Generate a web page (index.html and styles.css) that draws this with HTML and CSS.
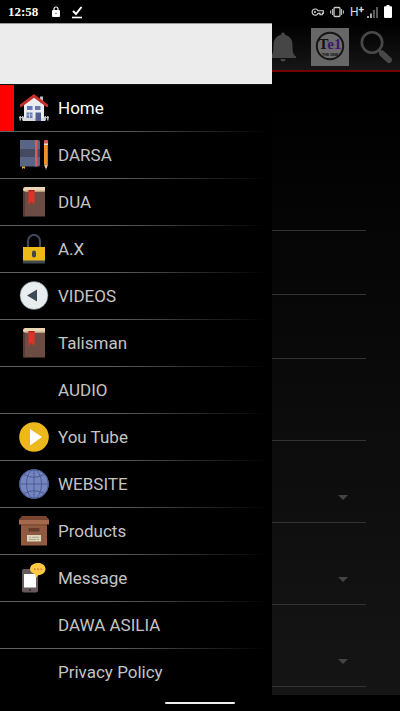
FILE: index.html
```html
<!DOCTYPE html>
<html lang="en">
<head>
<meta charset="UTF-8">
<meta name="viewport" content="width=device-width, initial-scale=1.0">
<title>Menu</title>
<link rel="stylesheet" href="styles.css">
</head>
<body>

<div class="status-bar">
    <span class="clock">12:58</span>
    <svg class="lock" width="10" height="12" viewBox="0 0 10 12"><rect x="1" y="4" width="8" height="7" rx="1" fill="#fff"/><path d="M3 5V3a2 2 0 0 1 4 0v2" fill="none" stroke="#fff" stroke-width="1.2"/><circle cx="5" cy="7.5" r=".8" fill="#777"/></svg>
    <svg class="check" width="12" height="14" viewBox="0 0 12 14"><path d="M2 6l3 3 5.500-7" fill="none" stroke="#fff" stroke-width="2"/><path d="M1 12.500h10" stroke="#fff" stroke-width="1.600"/></svg>
    <div class="signals">
        <svg width="13" height="14" viewBox="0 0 13 14"><path d="M7 5.800h5.300v2.600h-1v1.400H9V8.400H7a3.100 3.100 0 1 1 0-2.600z" fill="none" stroke="#ddd" stroke-width="1.100"/><circle cx="4" cy="7.100" r="1" fill="#ddd"/></svg>
        <svg width="14" height="14" viewBox="0 0 14 14"><rect x="4" y="2.500" width="6" height="9" rx="1" fill="none" stroke="#ccc" stroke-width="1.300"/><path d="M2.400 4v6M11.600 4v6M.6 5.500v3M13.400 5.500v3" stroke="#ccc"/></svg>
        <span class="network">H<sup>+</sup></span>
        <svg width="11" height="14" viewBox="0 0 11 14"><path d="M1 13v-2M4 13V8.500" stroke="#fff" stroke-width="1.300"/><path d="M7 13V5M10 13V2" stroke="#888" stroke-width="1.300"/></svg>
        <svg class="battery" width="8" height="14" viewBox="0 0 8 14"><path d="M2.500 0h3v1.200H7q1 0 1 1V12q0 1-1 1H1q-1 0-1-1V2.200q0-1 1-1h1.500z" fill="#fff"/></svg>
    </div>
</div>

<div class="screen">
    <header class="toolbar">
        <button type="button" aria-label="Notifications">
            <svg width="30" height="32" viewBox="0 0 30 32"><path d="M13 1.500q2 0 2 2.300c5.500 1.500 7.500 5.500 7.500 10.200 0 7 .5 9.500 3.500 11.500v1.500H0v-1.500c3-2 3.500-4.500 3.500-11.500 0-4.700 2-8.700 7.500-10.200q0-2.300 2-2.300z" fill="#464646"/><path d="M10.500 28h5a2.500 2.500 0 0 1-5 0z" fill="#464646"/></svg>
        </button>
        <svg class="logo" width="38" height="38" viewBox="0 0 38 38">
            <rect width="38" height="38" fill="#676767"/>
            <circle cx="19" cy="18" r="13.200" fill="#6c6c6c" stroke="#161616" stroke-width="2"/>
            <text x="19" y="21" class="logo-name" text-anchor="middle">T<tspan class="purple">e1</tspan></text>
            <text x="19" y="28" class="logo-sub" text-anchor="middle">THE ONE</text>
        </svg>
        <button type="button" aria-label="Search">
            <svg width="32" height="32" viewBox="0 0 32 32"><circle cx="12" cy="11.500" r="10.200" fill="none" stroke="#484848" stroke-width="2.600"/><path d="M18.500 19l3 3" stroke="#484848" stroke-width="3"/><path d="M22 22.500l7 6.500" stroke="#484848" stroke-width="6" stroke-linecap="round"/></svg>
        </button>
    </header>

    <form class="fields">
        <input class="first" type="text" aria-label="Name">
        <input type="text" aria-label="Phone">
        <input type="text" aria-label="Email">
        <input class="tall" type="text" aria-label="Address">
        <div class="pick"><select aria-label="Day"><option></option></select></div>
        <div class="pick"><select aria-label="Month"><option></option></select></div>
        <div class="pick"><select aria-label="Year"><option></option></select></div>
    </form>

    <nav class="drawer">
        <div class="drawer-header"></div>
        <ul>
            <li><a class="active" href="#"><svg class="icon" viewBox="0 0 30 30"><path d="M5 11L15 3l10 8v14H5z" fill="#e9edf0"/><path d="M21 3.500h3v7h-3z" fill="#b9bec4"/><path d="M0 24h5v1.200H0zM25 24h5v1.200h-5zM.5 23H2v4.500H.5zM3 23h1.500v4.500H3zM25.500 23H27v4.500h-1.500zM28 23h1.500v4.500H28z" fill="#b4babf"/><path d="M4 25h22v3H4z" fill="#d6dadd"/><path d="M15 1L1 11.500v2.600h1.500L15 4.800l12.500 9.300H29v-2.600z" fill="#c6302b"/><path d="M8 13h5.500v4H8zM16 13h5.500v4H16zM7.500 19.500h6V25h-6z" fill="#6577b5"/><path d="M16.500 19.500H22V28h-5.500z" fill="#506090"/><path d="M10.500 19.500V25M7.500 22h6" stroke="#d7dce5" stroke-width=".7"/></svg>Home</a></li>
            <li><a href="#"><svg class="icon" viewBox="0 0 30 30"><path d="M1 0h18.500q1.500 0 1.500 1.500V25q0 1.500-1.500 1.500H1z" fill="#596586"/><path d="M1 9h20v8H1z" fill="#444b60"/><path d="M16 0h2.500v26.500H16z" fill="#dd5a50"/><path d="M3 26.500h3V29l-1.500-1L3 29z" fill="#e7ac22"/><path d="M25 1q0-1 1-1h2q1 0 1 1v3h-4z" fill="#e2574c"/><path d="M25 3.500h4v1.500h-4z" fill="#d9dce0"/><path d="M25 5h4v19.500h-4z" fill="#ef9127"/><path d="M28 5h1v19.500h-1z" fill="#c97520"/><path d="M25 24.500h4L27 30z" fill="#e1c59c"/><path d="M26.200 28h1.600L27 30z" fill="#333"/></svg>DARSA</a></li>
            <li><a href="#"><svg class="icon" viewBox="0 0 30 30"><path d="M4 2q0-2 2-2h20v29.500H5q-1 0-1-1z" fill="#6d4c43"/><path d="M4 3h2v26.500H5q-1 0-1-1z" fill="#573b34"/><path d="M6 0h20v4.500H6Q4 4.500 4 2.500T6 0z" fill="#ead6b2"/><path d="M6 3.500h20v1H6z" fill="#c3a984"/><path d="M9.500 3h6v15l-3-3.500L9.500 18z" fill="#df3229"/><path d="M9.500 3h6v1.500h-6z" fill="#b22722"/></svg>DUA</a></li>
            <li><a href="#"><svg class="icon" viewBox="0 0 30 30"><path d="M9 14V7a6 6 0 0 1 12 0v7" fill="none" stroke="#3e485a" stroke-width="2.200"/><path d="M4 13h22v14H4z" fill="#ecba16"/><path d="M4 26.500h22v3H4z" fill="#3e4a52"/><path d="M15 16.500a2 2 0 0 1 2 2v3a2 2 0 0 1-4 0v-3a2 2 0 0 1 2-2z" fill="#3f4650"/></svg>A.X</a></li>
            <li><a href="#"><svg class="icon" viewBox="0 0 30 30"><circle cx="15" cy="14.500" r="14" fill="#e8eef0" stroke="#566b78" stroke-width=".6"/><path d="M8 14.500l10-6v12z" fill="#3d4954"/></svg>VIDEOS</a></li>
            <li><a href="#"><svg class="icon" viewBox="0 0 30 30"><path d="M4 2q0-2 2-2h20v29.500H5q-1 0-1-1z" fill="#6d4c43"/><path d="M4 3h2v26.500H5q-1 0-1-1z" fill="#573b34"/><path d="M6 0h20v4.500H6Q4 4.500 4 2.500T6 0z" fill="#ead6b2"/><path d="M6 3.500h20v1H6z" fill="#c3a984"/><path d="M9.500 3h6v15l-3-3.500L9.500 18z" fill="#df3229"/><path d="M9.500 3h6v1.500h-6z" fill="#b22722"/></svg>Talisman</a></li>
            <li><a href="#"><span class="icon"></span>AUDIO</a></li>
            <li><a href="#"><svg class="icon" viewBox="0 0 30 30"><circle cx="15" cy="15" r="14.800" fill="#ecb81b"/><path d="M11 7l12 8-12 8.500z" fill="#fff"/></svg>You Tube</a></li>
            <li><a href="#"><svg class="icon" viewBox="0 0 30 30"><circle cx="15" cy="15" r="14.800" fill="#7585c2"/><g fill="none" stroke="#46578f" stroke-width=".9"><circle cx="15" cy="15" r="14.300"/><ellipse cx="15" cy="15" rx="7.500" ry="14.500"/><path d="M15 .5v29M.5 15h29M5 5.500q10 5.500 20 0M5 24.500q10-5.500 20 0"/></g></svg>WEBSITE</a></li>
            <li><a href="#"><svg class="icon" viewBox="0 0 30 30"><path d="M3 0h24l3 3.500H0z" fill="#7d452e"/><path d="M2 8h26v21.500H2z" fill="#8f5a40"/><path d="M0 3.500h30v5H0z" fill="#a5694d"/><path d="M2 8.500h26v1H2z" fill="#74442e"/><path d="M9.500 12h11v3.500h-11z" fill="#663a29"/><path d="M8 19h14v6.500H8z" fill="#ded6bd"/><path d="M10 21.300h2M13 21.300h7M10 23.500h7M18 23.500h2" stroke="#9c9986" stroke-width=".8"/></svg>Products</a></li>
            <li><a href="#"><svg class="icon" viewBox="0 0 30 30"><rect x="3" y="6" width="16" height="23.500" rx="2" fill="#665a5c"/><path d="M5 11h12v13.500H5z" fill="#fff"/><circle cx="11" cy="27" r="1.100" fill="#392f31"/><path d="M19 0c4.500 0 7.500 2.600 7.500 6s-3 6-7 6l-2.500 3-1-4c-3-.7-5-2.500-5-5 0-3.400 3.500-6 8-6z" fill="#fbca42"/><path d="M15 6.200h1.500M18.300 6.200h1.500M21.600 6.200h1.500" stroke="#e26b43" stroke-width="1.400"/></svg>Message</a></li>
            <li><a href="#"><span class="icon"></span>DAWA ASILIA</a></li>
            <li><a href="#"><span class="icon"></span>Privacy Policy</a></li>
        </ul>
    </nav>
</div>

<div class="gesture-bar"><span></span></div>

</body>
</html>
```
FILE: styles.css
```css
* {
    box-sizing: border-box;
}

body {
    font-family: Roboto, sans-serif;
    background-color: #000;
    color: #c4c4c4;
    margin: 0;
    min-height: 100vh;
    display: flex;
    flex-direction: column;
}

svg {
    display: block;
    flex: none;
}

button {
    background: none;
    border: none;
    padding: 0;
}

.status-bar {
    height: 23px;
    padding: 0 8px;
    display: flex;
    align-items: center;
    color: #fff;
}

.clock {
    font-family: "Liberation Serif", serif;
    font-size: 13px;
    font-weight: bold;
}

.lock {
    margin-left: 13px;
}

.check {
    margin-left: 10px;
}

.signals {
    margin-left: auto;
    display: flex;
    align-items: center;
    gap: 6px;
}

.network {
    font-size: 12px;
    line-height: 14px;
    display: flex;
    color: #ddd;
    margin-right: -3px;
}

.network sup {
    font-size: 10px;
    font-weight: bold;
    line-height: 10px;
}

.screen {
    flex: 1;
    position: relative;
    background: linear-gradient(#000 10%, #060606 35%, #151515);
}

.toolbar {
    height: 49px;
    padding: 0 8px;
    display: flex;
    align-items: center;
    justify-content: flex-end;
    gap: 11px;
    background: linear-gradient(#000, #161616);
    border-bottom: 2px solid #700000;
}

.logo-name {
    font-family: "Liberation Serif", serif;
    font-size: 15px;
    font-weight: bold;
    fill: #111;
}

.purple {
    fill: #3c176b;
}

.logo-sub {
    font-size: 4px;
    font-weight: bold;
    fill: #111;
}

.fields {
    margin: 0 34px;
    display: flex;
    flex-direction: column;
}

.fields input,
.fields select {
    width: 100%;
    height: 64px;
    background: transparent;
    border: none;
    border-bottom: 1px solid #333;
    border-radius: 0;
    color: #666;
    appearance: none;
}

.fields .first {
    height: 159px;
}

.fields .tall,
.fields select {
    height: 82px;
}

.pick {
    position: relative;
}

.pick select {
    display: block;
}

.pick::after {
    content: "";
    position: absolute;
    right: 18px;
    bottom: 23px;
    border: 5px solid transparent;
    border-top-color: #444;
    border-bottom: none;
}

/* side menu over the page */
.drawer {
    position: absolute;
    top: 0;
    left: 0;
    bottom: 0;
    width: 68%;
    background-color: #000;
}

.drawer-header {
    height: 62px;
    background-color: #ececec;
    border-top: 1px solid #999;
    border-bottom: 1px solid #111;
}

.drawer ul {
    list-style-type: none;
    margin: 0;
    padding: 0;
}

.drawer li {
    padding-bottom: 1px;
    background: linear-gradient(to right, #606060 40%, transparent 98%) bottom / 100% 1px no-repeat;
}

.drawer li:last-child {
    padding-bottom: 0;
    background: none;
}

.drawer a {
    height: 46px;
    padding-left: 5px;
    border-left: 14px solid transparent;
    display: flex;
    align-items: center;
    gap: 9px;
    color: #c4c4c4;
    font-size: 17px;
    text-decoration: none;
}

.drawer .active {
    border-left-color: #f00;
    color: #fff;
}

.icon {
    width: 30px;
    height: 30px;
}

.gesture-bar {
    height: 16px;
    display: flex;
    align-items: center;
    justify-content: center;
}

.gesture-bar span {
    width: 70px;
    height: 2px;
    border-radius: 1px;
    background-color: #eee;
}
```
